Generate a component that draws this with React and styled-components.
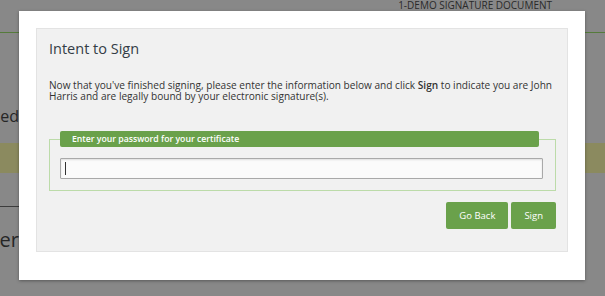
import React from "react";
import styled, { createGlobalStyle } from "styled-components";

const GlobalStyle = createGlobalStyle`
  html, body {
    margin: 0;
    height: 100%;
    overflow: hidden;
  }
  body {
    background: #888888;
    font-family: "Open Sans", "Liberation Sans", sans-serif;
  }
`;

/* page that sits behind the dimmed overlay */
const Page = styled.div`
  display: flex;
  flex-direction: column;
  color: #262626;
`;

const Header = styled.div`
  height: 32px;
  border-bottom: 1px solid #557b3b;
  display: flex;
  justify-content: flex-end;
  padding-right: 53px;
`;

const DocTitle = styled.span`
  margin-top: -1px;
  font-size: 10px;
  line-height: 12px;
  color: #2a2a2a;
  text-transform: uppercase;
`;

const Clip = styled.div`
  width: 19px;
  overflow: hidden;
  display: flex;
  justify-content: flex-end;
  white-space: nowrap;
  font-size: ${(p) => p.$size}px;
  line-height: ${(p) => p.$lh}px;
  margin-top: ${(p) => p.$top}px;
`;

const Band = styled.div`
  height: 30px;
  margin-top: ${(p) => p.$top}px;
  background: #8b8a5f;
`;

const Rule = styled.div`
  width: 50%;
  margin-top: 33px;
  border-bottom: 1px solid #3c3c3c;
`;

/* modal */
const Modal = styled.div`
  position: fixed;
  top: 11px;
  left: 19px;
  width: 566px;
  height: 269px;
  box-sizing: border-box;
  padding: 17px;
  background: #ffffff;
  box-shadow: 0 1px 3px rgba(0, 0, 0, 0.35);
`;

const Panel = styled.div`
  height: 224px;
  box-sizing: border-box;
  padding: 10px 11px 0 12px;
  background: #f1f1f1;
  border: 1px solid #e3e3e3;
`;

const Title = styled.h2`
  margin: 0;
  font-size: 14.5px;
  font-weight: 400;
  line-height: 20px;
  color: #343d46;
`;

const Text = styled.p`
  margin: 21px 0 0;
  font-size: 10.1px;
  line-height: 10.5px;
  color: #333333;

  b {
    font-weight: 600;
  }
`;

const Field = styled.fieldset`
  margin: 30px 0 0;
  padding: 0 12px 11px 10px;
  min-width: 0;
  border: 1px solid #bcdba9;
`;

const Legend = styled.legend`
  box-sizing: border-box;
  width: 479px;
  height: 16px;
  padding: 0 12px;
  background: #6aa14b;
  border-radius: 2px;
  color: #ffffff;
  font-size: 8.7px;
  font-weight: 600;
  line-height: 16px;
`;

const InputWrap = styled.div`
  position: relative;
  margin-top: 11px;
`;

const Input = styled.input`
  display: block;
  width: 100%;
  height: 21px;
  box-sizing: border-box;
  border: 1px solid #a9a9a9;
  border-radius: 1px;
  background: #fbfbfb;
  box-shadow: inset 0 1px 2px rgba(0, 0, 0, 0.12);
  outline: none;
`;

const Caret = styled.span`
  position: absolute;
  left: 5px;
  top: 4px;
  width: 1px;
  height: 13px;
  background: #333333;
`;

const Actions = styled.div`
  display: flex;
  justify-content: flex-end;
  gap: 3px;
  margin-top: 11px;
`;

const Button = styled.button`
  height: 27px;
  padding: 0 13px;
  border: none;
  border-radius: 2px;
  background: #6aa14b;
  color: #ffffff;
  font-family: "Open Sans", "Liberation Sans", sans-serif;
  font-size: 9.5px;
  cursor: pointer;
`;

export default function App() {
  return (
    <>
      <GlobalStyle />
      <Page>
        <Header>
          <DocTitle>1-Demo Signature Document</DocTitle>
        </Header>
        <Clip $size={16} $lh={20} $top={73}>Signed</Clip>
        <Band $top={17} />
        <Rule />
        <Clip $size={20} $lh={24} $top={21}>Signer</Clip>
      </Page>

      <Modal>
        <Panel>
          <Title>Intent to Sign</Title>
          <Text>
            Now that you've finished signing, please enter the information below and click <b>Sign</b> to
            indicate you are John Harris and are legally bound by your electronic signature(s).
          </Text>
          <Field>
            <Legend>Enter your password for your certificate</Legend>
            <InputWrap>
              <Input type="password" />
              <Caret />
            </InputWrap>
          </Field>
          <Actions>
            <Button>Go Back</Button>
            <Button>Sign</Button>
          </Actions>
        </Panel>
      </Modal>
    </>
  );
}
